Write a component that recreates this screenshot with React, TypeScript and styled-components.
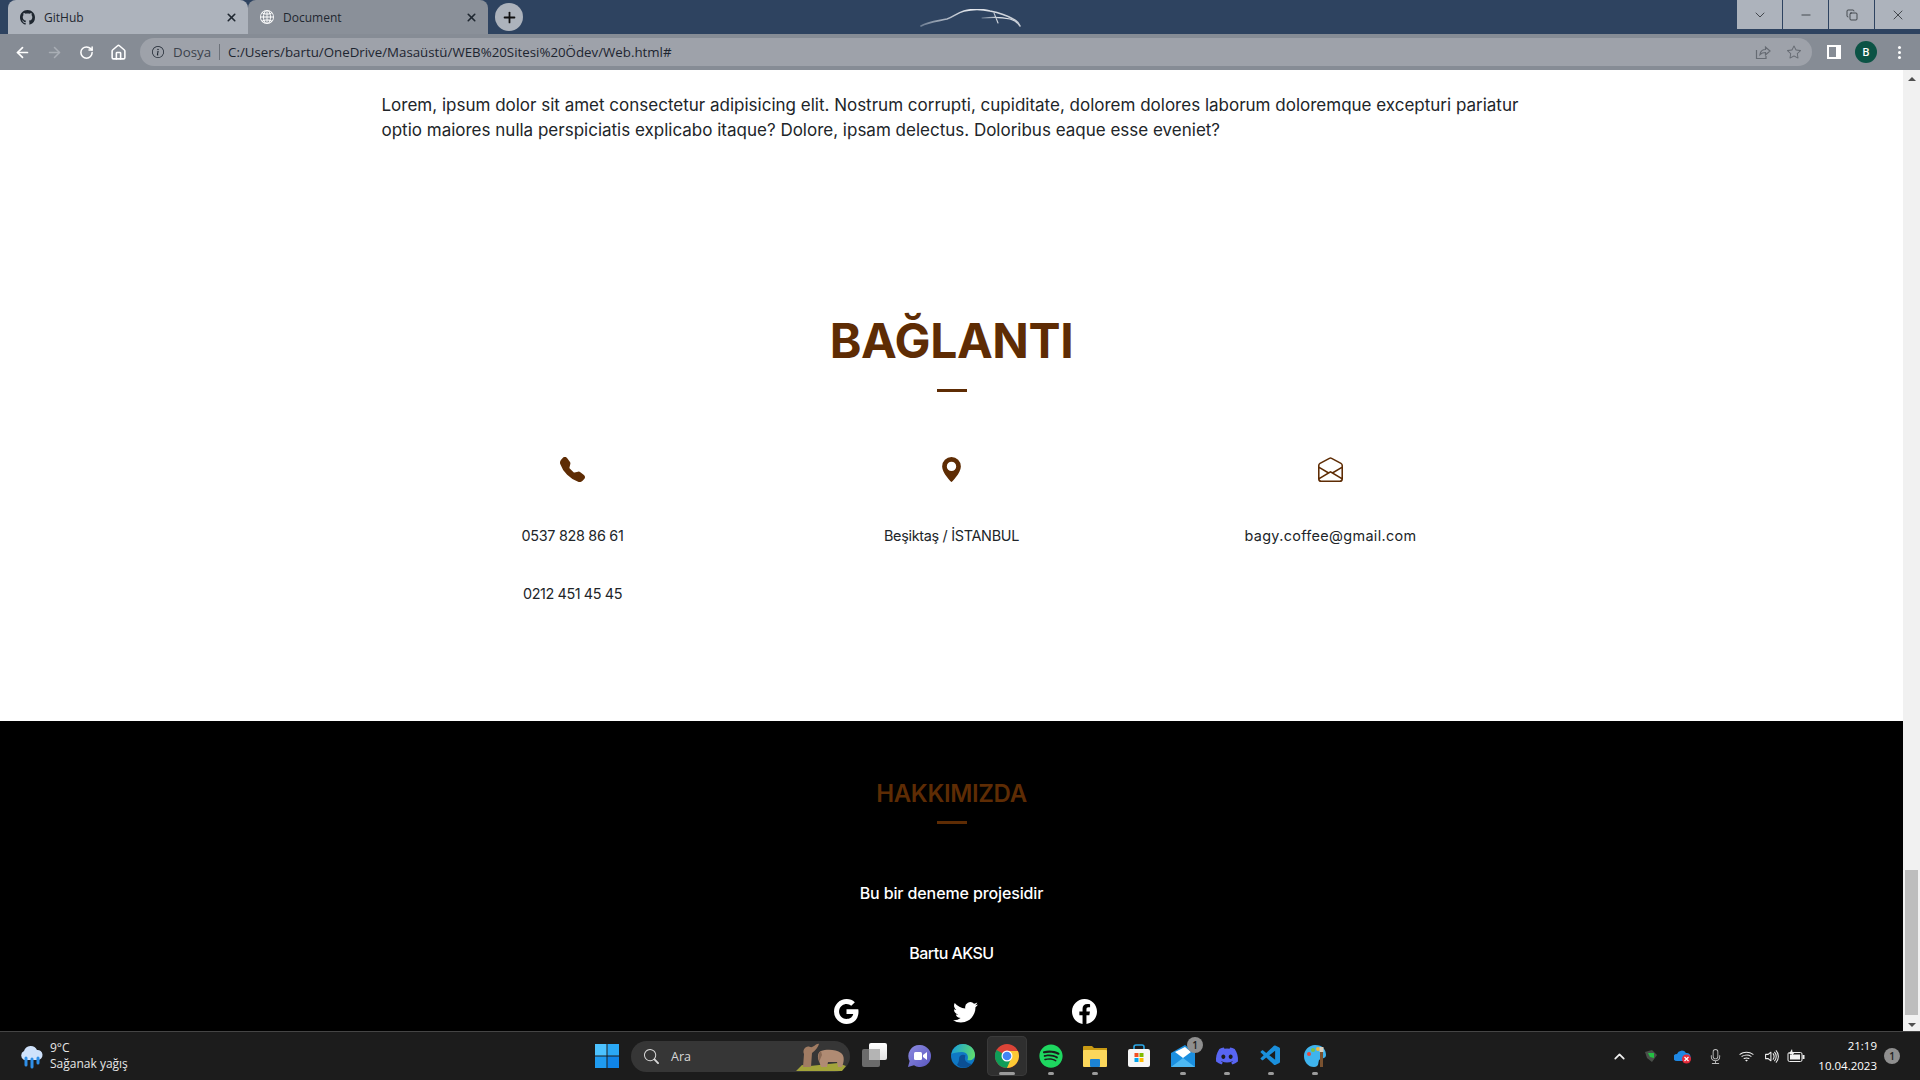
import * as React from 'react';
import styled, { createGlobalStyle } from 'styled-components';
import { BsTelephoneFill, BsGeoAltFill, BsEnvelopeOpen, BsGoogle, BsTwitter, BsFacebook, BsGithub, BsGlobe2, BsMic, BsVolumeUp, BsWifi, BsSearch, BsStar, BsInfoCircle } from 'react-icons/bs';
import { FaSpotify, FaDiscord } from 'react-icons/fa';
import { VscVscode } from 'react-icons/vsc';
import { ArrowLeft, ArrowRight, RotateCw, Home, Plus, X, ChevronDown, ChevronUp, Minus, Copy } from 'lucide-react';

const brown = '#5e2c04';
const bodyFont = `Inter, "Open Sans", sans-serif`;
const uiFont = `"Open Sans", "Noto Sans", sans-serif`;

const GlobalStyle = createGlobalStyle`
  html, body { margin: 0; padding: 0; height: 100%; overflow: hidden; }
  * { box-sizing: border-box; }
`;

const Screen = styled.div`
  width: 1920px;
  height: 1080px;
  display: flex;
  flex-direction: column;
  overflow: hidden;
  font-family: ${bodyFont};
  background: #fff;
`;

/* browser chrome */
const TabStrip = styled.div`
  height: 34px;
  flex: none;
  display: flex;
  align-items: flex-start;
  padding-left: 8px;
  background: #2e4360;
`;

const Tab = styled.div<{ $active?: boolean }>`
  width: 240px;
  height: 34px;
  display: flex;
  align-items: center;
  padding: 0 10px 0 12px;
  gap: 9px;
  border-radius: 8px 8px 0 0;
  background: ${(p) => (p.$active ? '#adb3bc' : '#8a9099')};
  color: #1f2730;
  font: 400 12px ${uiFont};
  svg { flex: none; }
`;

const TabTitle = styled.span`
  flex: 1;
`;

const NewTab = styled.div`
  width: 28px;
  height: 28px;
  margin: 3px 0 0 7px;
  border-radius: 50%;
  background: #adb3bc;
  display: flex;
  align-items: center;
  justify-content: center;
  color: #111;
`;

const CarLogo = styled.svg`
  margin: 9px 0 0 397px;
`;

const WindowButtons = styled.div`
  margin-left: auto;
  display: flex;
  gap: 1px;
  height: 29px;
`;

const WindowButton = styled.div`
  width: 45px;
  height: 29px;
  background: #adb3bc;
  display: flex;
  align-items: center;
  justify-content: center;
  color: #1b1f24;
`;

const Toolbar = styled.div`
  height: 36px;
  flex: none;
  display: flex;
  align-items: center;
  padding: 0 8px 0 6px;
  background: #868c95;
`;

const NavButton = styled.div<{ $off?: boolean }>`
  width: 32px;
  height: 32px;
  display: flex;
  align-items: center;
  justify-content: center;
  color: ${(p) => (p.$off ? '#a9aeb5' : '#fff')};
`;

const AddressBar = styled.div`
  width: 1672px;
  height: 28px;
  margin-left: 6px;
  padding: 0 11px 0 12px;
  border-radius: 14px;
  display: flex;
  align-items: center;
  background: #9ea2aa;
  font: 400 13.3px ${uiFont};
  color: #1d2530;
`;

const Scheme = styled.span`
  margin-left: 9px;
  padding-right: 8px;
  border-right: 1px solid #6d727a;
  line-height: 16px;
  color: #3c434c;
`;

const Url = styled.span`
  margin-left: 8px;
  flex: 1;
`;

const BarIcon = styled.span`
  display: flex;
  margin-left: 16px;
  color: #666b73;
`;

const SidePanel = styled.div`
  width: 14px;
  height: 14px;
  margin-left: 15px;
  border: 2px solid #fff;
  border-right-width: 5px;
  background: #868c95;
`;

const Avatar = styled.div`
  width: 22px;
  height: 22px;
  margin-left: 14px;
  border-radius: 50%;
  background: #0b5345;
  color: #fff;
  font: 600 11px/22px ${uiFont};
  text-align: center;
`;

const Dots = styled.div`
  margin-left: 21px;
  width: 3px;
  height: 3px;
  border-radius: 50%;
  background: #fff;
  box-shadow: 0 -5px 0 #fff, 0 5px 0 #fff;
`;

/* page */
const Viewport = styled.div`
  flex: 1;
  min-height: 0;
  display: flex;
`;

const Page = styled.div`
  flex: 1;
  min-width: 0;
  display: flex;
  flex-direction: column;
  overflow: hidden;
`;

const ContentArea = styled.section`
  height: 651px;
  flex: none;
  padding-top: 23px;
  background: #fff;
`;

const Intro = styled.p`
  width: 1140px;
  margin: 0 auto;
  font-size: 17px;
  line-height: 25.4px;
  color: #212529;
`;

const Heading = styled.h2`
  margin: 169px 0 0;
  font-size: 48px;
  line-height: 56px;
  font-weight: 700;
  letter-spacing: -0.4px;
  text-align: center;
  color: ${brown};
`;

const Rule = styled.div<{ $top: number }>`
  width: 30px;
  height: 3px;
  margin: ${(p) => p.$top}px auto 0;
  background: ${brown};
`;

const ContactGrid = styled.div`
  width: 1137px;
  margin: 65px auto 0;
  display: grid;
  grid-template-columns: repeat(3, 1fr);
`;

const ContactColumn = styled.div`
  display: flex;
  flex-direction: column;
  align-items: center;
  color: ${brown};
`;

const ContactText = styled.div<{ $first?: boolean; $tracking?: number }>`
  margin-top: ${(p) => (p.$first ? 44 : 38)}px;
  font-size: 14.4px;
  line-height: 20px;
  letter-spacing: ${(p) => p.$tracking ?? 0}px;
  color: #212529;
`;

const Footer = styled.footer`
  flex: 1;
  min-height: 0;
  padding-top: 59px;
  background: #000;
  text-align: center;
  color: #fff;
`;

const FooterHeading = styled.h3`
  margin: 0;
  font-size: 24px;
  line-height: 28px;
  font-weight: 600;
  letter-spacing: -0.35px;
  color: ${brown};
`;

const FooterText = styled.div<{ $top: number; $tracking: number }>`
  margin-top: ${(p) => p.$top}px;
  font-size: 16px;
  font-weight: 500;
  line-height: 20px;
  letter-spacing: ${(p) => p.$tracking}px;
`;

const Socials = styled.div`
  margin-top: 36px;
  padding-left: 27px;
  display: flex;
  justify-content: center;
  gap: 94px;
`;

const Scrollbar = styled.div`
  width: 17px;
  flex: none;
  display: flex;
  flex-direction: column;
  align-items: center;
  background: #f1f1f1;
`;

const Arrow = styled.div<{ $down?: boolean }>`
  width: 0;
  height: 0;
  margin: ${(p) => (p.$down ? '8px 0 0' : '7px 0 0')};
  border-left: 4px solid transparent;
  border-right: 4px solid transparent;
  ${(p) => (p.$down ? 'border-top: 4px solid #505050;' : 'border-bottom: 4px solid #505050;')}
`;

const Thumb = styled.div`
  width: 13px;
  height: 145px;
  margin-top: 789px;
  background: #bdbdbd;
`;

/* taskbar */
const Taskbar = styled.div`
  height: 49px;
  flex: none;
  display: flex;
  align-items: center;
  border-top: 1px solid #454545;
  background: #1c1c1c;
  color: #fff;
  font-family: ${uiFont};
`;

const Weather = styled.div`
  width: 587px;
  flex: none;
  padding-left: 18px;
  display: flex;
  align-items: center;
  gap: 6px;
`;

const WeatherText = styled.div`
  font-size: 12px;
  line-height: 16px;
  color: #e6e6e6;
`;

const StartIcons = styled.div`
  display: flex;
  align-items: center;
`;

const SearchBox = styled.div`
  width: 219px;
  height: 31px;
  margin-right: 5px;
  padding: 0 2px 0 13px;
  border-radius: 16px;
  display: flex;
  align-items: center;
  gap: 12px;
  background: #363636;
  color: #d8d8d8;
  font-size: 12.5px;
`;

const SearchLabel = styled.span`
  flex: 1;
`;

const TaskIcon = styled.div<{ $active?: boolean; $pip?: boolean }>`
  position: relative;
  width: 40px;
  height: 40px;
  margin-right: 4px;
  display: flex;
  align-items: center;
  justify-content: center;
  border-radius: 5px;
  ${(p) => p.$active && 'background: #2f2f2f; box-shadow: inset 0 0 0 1px #3a3a3a;'}
  &::after {
    content: '';
    display: ${(p) => (p.$active || p.$pip ? 'block' : 'none')};
    position: absolute;
    bottom: 1px;
    left: 50%;
    transform: translateX(-50%);
    width: ${(p) => (p.$active ? 16 : 6)}px;
    height: 3px;
    border-radius: 2px;
    background: #9b9b9b;
  }
`;

const Badge = styled.span`
  position: absolute;
  top: 1px;
  right: 0;
  width: 16px;
  height: 16px;
  border-radius: 50%;
  background: #8f8f8f;
  color: #222;
  font-size: 10px;
  font-weight: 600;
  line-height: 16px;
  text-align: center;
`;

const Tray = styled.div`
  margin-left: auto;
  display: flex;
  align-items: center;
  padding-right: 20px;
`;

const TrayIcon = styled.div<{ $width: number }>`
  width: ${(p) => p.$width}px;
  display: flex;
  justify-content: center;
  color: #f0f0f0;
`;

const Clock = styled.div`
  margin-left: 9px;
  font-size: 11.5px;
  line-height: 20px;
  text-align: right;
  color: #fff;
`;

const Notice = styled.div`
  width: 16px;
  height: 16px;
  margin-left: 7px;
  border-radius: 50%;
  background: #8f8f8f;
  color: #222;
  font-size: 10px;
  font-weight: 600;
  line-height: 16px;
  text-align: center;
`;

const Car = () => (
  <CarLogo width="102" height="18" viewBox="0 0 102 18" fill="none" stroke="url(#carShine)" strokeLinecap="round">
    <defs>
      <linearGradient id="carShine" x1="0" x2="1" y1="0" y2="0">
        <stop offset="0" stopColor="#6f7f94" />
        <stop offset="0.5" stopColor="#e6e9ee" />
        <stop offset="1" stopColor="#c4cad3" />
      </linearGradient>
    </defs>
    <path d="M1 17 C8 13 18 12 27 10 C33 8 37 4 44 2 C52 0 62 0 70 2 C80 4 88 7 93 10 C97 12 99 14 100 17" strokeWidth="1.6" />
    <path d="M27 10 L52 10" strokeWidth="1.2" />
    <path d="M62 9 C72 8 82 8 90 10 M74 4 L78 14 M90 10 C94 11 97 13 99 16" strokeWidth="1.1" />
  </CarLogo>
);

const ShareIcon = () => (
  <svg width="16" height="16" viewBox="0 0 16 16" fill="none" stroke="currentColor" strokeWidth="1.2">
    <path d="M1.500 6 V14.500 H11 V12" />
    <path d="M5 10.500 C5.500 7 8 5.500 10.500 5.500 V3 L15 7 L10.500 11 V8.500 C8 8.500 6.500 9 5 10.500 z" />
  </svg>
);

const WeatherIcon = () => (
  <svg width="26" height="26" viewBox="0 0 26 26">
    <path d="M6 17 a5 5 0 0 1 0-9 a7 7 0 0 1 13-1 a5 5 0 0 1 1 10 z" fill="#cfe2fb" />
    <path d="M8 15 v7 M14 16 v8 M20 15 v5" stroke="#2f8fe8" strokeWidth="3" strokeLinecap="round" />
  </svg>
);

const Windows = () => (
  <svg width="24" height="24" viewBox="0 0 24 24">
    <rect x="0" y="0" width="11.5" height="11.5" fill="#4cc2ff" />
    <rect x="12.5" y="0" width="11.5" height="11.5" fill="#2aa8f5" />
    <rect x="0" y="12.5" width="11.5" height="11.5" fill="#1f9bf0" />
    <rect x="12.5" y="12.5" width="11.5" height="11.5" fill="#0f84e8" />
  </svg>
);

const Elephants = () => (
  <svg width="52" height="29" viewBox="0 0 52 29">
    <path d="M0 29 L6 23 L14 24 L42 21 L50 24 L46 29 Z" fill="#a3a43a" />
    <path d="M7 25 L8 12 C6 8 10 3 14 5 C18 6 20 1 23 2 C22 5 20 8 16 11 L15 25 Z" fill="#a17c63" />
    <path d="M25 25 L23 19 C21 15 22 10 25 9 C30 7 40 7 45 11 C49 14 48 20 46 25 H42 L41 20 H32 L31 25 Z" fill="#b08b73" />
    <path d="M25 9 C22 11 22 16 23 20 L26 13 z" fill="#8a6a55" />
  </svg>
);

const TaskView = () => (
  <svg width="26" height="26" viewBox="0 0 26 26">
    <defs>
      <linearGradient id="taskFront" x1="0" x2="0" y1="0" y2="1">
        <stop offset="0" stopColor="#ffffff" />
        <stop offset="1" stopColor="#e2e2e2" />
      </linearGradient>
    </defs>
    <rect x="7" y="0" width="18" height="17" rx="2" fill="url(#taskFront)" />
    <rect x="0" y="6" width="18" height="18" rx="2" fill="#6b6b6b" />
    <rect x="7" y="6" width="11" height="11" fill="#b4b4b4" />
  </svg>
);

const Teams = () => (
  <svg width="24" height="24" viewBox="0 0 24 24">
    <defs>
      <linearGradient id="teamsFill" x1="0" x2="1" y1="0" y2="1">
        <stop offset="0" stopColor="#8d8be0" />
        <stop offset="1" stopColor="#5a57c0" />
      </linearGradient>
    </defs>
    <path d="M13 1 a11 11 0 1 1 -6 20.200 L1 23 L2.600 17 A11 11 0 0 1 13 1 z" fill="url(#teamsFill)" />
    <rect x="7" y="8" width="8" height="8" rx="1.5" fill="#fff" />
    <path d="M16 11 l4-3 v8 l-4-3 z" fill="#fff" />
  </svg>
);

const Edge = () => (
  <svg width="24" height="24" viewBox="0 0 24 24">
    <defs>
      <linearGradient id="edgeTop" x1="0" x2="1" y1="0.300" y2="0.500">
        <stop offset="0" stopColor="#1aa0d8" />
        <stop offset="1" stopColor="#5fdc6e" />
      </linearGradient>
    </defs>
    <circle cx="12" cy="12" r="12" fill="#0f78c4" />
    <path d="M0.500 10 C2 3 7 0 12 0 C19 0 24 5 24 11 C24 15 20 17 16.500 16 C18 12 16 8 11 8 C6 8 2 9 0.500 10 z" fill="url(#edgeTop)" />
    <path d="M8 15 C8 11 12 10 14.500 11.500 C13 15 14 19 21 20 C17 24.500 9 25 6 20.500 C7.500 19 8 17 8 15 z" fill="#0b4f94" />
  </svg>
);

const Chrome = () => (
  <svg width="24" height="24" viewBox="0 0 24 24">
    <circle cx="12" cy="12" r="12" fill="#db4437" />
    <path d="M12 12 L1.600 6 A12 12 0 0 0 12 24 L18 13.500 z" fill="#0f9d58" />
    <path d="M12 7 H22.900 A12 12 0 0 1 12 24 L17 12 z" fill="#fcc934" />
    <circle cx="12" cy="12" r="5.500" fill="#fff" />
    <circle cx="12" cy="12" r="4.300" fill="#4285f4" />
  </svg>
);

const Files = () => (
  <svg width="24" height="24" viewBox="0 0 24 24">
    <path d="M0 3 a1 1 0 0 1 1-1 h8 l2 2 h13 v4 H0 z" fill="#c99a13" />
    <rect x="0" y="6" width="24" height="17" rx="1" fill="#fbd75b" />
    <rect x="7" y="15" width="10" height="8" rx="1" fill="#1c83d4" />
  </svg>
);

const Store = () => (
  <svg width="24" height="24" viewBox="0 0 24 24">
    <path d="M7 5 V3 a2 2 0 0 1 2-2 h6 a2 2 0 0 1 2 2 v2" stroke="#2aa8e8" strokeWidth="1.6" fill="none" />
    <rect x="1" y="5" width="22" height="18" rx="2" fill="#f6f6f6" />
    <rect x="7.500" y="9" width="4" height="4" fill="#f25022" />
    <rect x="12.500" y="9" width="4" height="4" fill="#7fba00" />
    <rect x="7.500" y="14" width="4" height="4" fill="#00a4ef" />
    <rect x="12.500" y="14" width="4" height="4" fill="#ffb900" />
  </svg>
);

const Mail = () => (
  <svg width="24" height="24" viewBox="0 0 24 24">
    <path d="M0 9 L14 1 L24 9 V23 H0 z" fill="#1a8fe0" />
    <path d="M4 8 L14 3 L20 8 L12 14 z" fill="#fff" />
    <path d="M0 23 L12 14 L24 23 z" fill="#4db8f2" />
  </svg>
);

const Palette = () => (
  <svg width="24" height="24" viewBox="0 0 24 24">
    <path d="M12 1 C20 1 23 6 23 11 C23 15 18 14 16 16 C15 19 16 23 11 23 C5 23 1 18 1 12 C1 6 6 1 12 1 z" fill="#3fb4ee" />
    <circle cx="6" cy="10" r="2" fill="#e8483a" />
    <circle cx="10" cy="6" r="2" fill="#7cc243" />
    <circle cx="15" cy="5" r="2" fill="#f4b83a" />
    <rect x="17" y="6" width="3" height="17" fill="#7a5230" />
    <rect x="16.500" y="3" width="4" height="5" fill="#d8d0c0" />
  </svg>
);

const Shield = () => (
  <svg width="14" height="14" viewBox="0 0 14 14">
    <path d="M1 3 L8 1 L13 6 L8 13 L3 9 z" fill="#4a4f4a" />
    <path d="M4 4 L10 4 L10 9 L6 8 z" fill="#23c043" />
  </svg>
);

const CloudError = () => (
  <svg width="18" height="16" viewBox="0 0 18 16">
    <path d="M3 13 a3.500 3.500 0 0 1 0-7 a5 5 0 0 1 9-1 a4 4 0 0 1 1 8 z" fill="#1e88e5" />
    <circle cx="12.500" cy="11" r="4.500" fill="#e5293a" />
    <path d="M10.500 9 L14.500 13 M14.500 9 L10.500 13" stroke="#fff" strokeWidth="1.2" />
  </svg>
);

const Battery = () => (
  <svg width="18" height="14" viewBox="0 0 18 14">
    <rect x="1" y="3.500" width="14" height="9" rx="1.500" fill="none" stroke="#f0f0f0" />
    <rect x="3" y="5.500" width="10" height="5" fill="#f0f0f0" />
    <rect x="15.500" y="6" width="2" height="4" fill="#f0f0f0" />
    <path d="M5 0 L2 5 H5 L4 8 L8 3 H5.500 z" fill="#f0f0f0" />
  </svg>
);

const App: React.FC = () => {
  return (
    <Screen>
      <GlobalStyle />
      <TabStrip>
        <Tab $active>
          <BsGithub size={15} />
          <TabTitle>GitHub</TabTitle>
          <X size={13} strokeWidth={3} />
        </Tab>
        <Tab>
          <BsGlobe2 size={14} color="#fff" />
          <TabTitle>Document</TabTitle>
          <X size={13} strokeWidth={3} />
        </Tab>
        <NewTab><Plus size={17} strokeWidth={2.5} /></NewTab>
        <Car />
        <WindowButtons>
          <WindowButton><ChevronDown size={16} strokeWidth={1.1} /></WindowButton>
          <WindowButton><Minus size={14} strokeWidth={1.2} /></WindowButton>
          <WindowButton><Copy size={12} strokeWidth={1.4} /></WindowButton>
          <WindowButton><X size={16} strokeWidth={1.1} /></WindowButton>
        </WindowButtons>
      </TabStrip>
      <Toolbar>
        <NavButton><ArrowLeft size={17} strokeWidth={2.4} /></NavButton>
        <NavButton $off><ArrowRight size={17} strokeWidth={2.2} /></NavButton>
        <NavButton><RotateCw size={15} strokeWidth={2.4} /></NavButton>
        <NavButton><Home size={17} strokeWidth={2.2} /></NavButton>
        <AddressBar>
          <BsInfoCircle size={12} />
          <Scheme>Dosya</Scheme>
          <Url>C:/Users/bartu/OneDrive/Masaüstü/WEB%20Sitesi%20Ödev/Web.html#</Url>
          <BarIcon><ShareIcon /></BarIcon>
          <BarIcon><BsStar size={14} /></BarIcon>
        </AddressBar>
        <SidePanel />
        <Avatar>B</Avatar>
        <Dots />
      </Toolbar>

      <Viewport>
        <Page>
          <ContentArea>
            <Intro>
              Lorem, ipsum dolor sit amet consectetur adipisicing elit. Nostrum corrupti, cupiditate, dolorem dolores laborum doloremque excepturi pariatur optio maiores nulla perspiciatis explicabo itaque? Dolore, ipsam delectus. Doloribus eaque esse eveniet?
            </Intro>
            <Heading>BAĞLANTI</Heading>
            <Rule $top={20} />
            <ContactGrid>
              <ContactColumn>
                <BsTelephoneFill size={25} />
                <ContactText $first $tracking={-0.3}>0537 828 86 61</ContactText>
                <ContactText $tracking={-0.4}>0212 451 45 45</ContactText>
              </ContactColumn>
              <ContactColumn>
                <BsGeoAltFill size={25} />
                <ContactText $first $tracking={-0.3}>Beşiktaş / İSTANBUL</ContactText>
              </ContactColumn>
              <ContactColumn>
                <BsEnvelopeOpen size={25} />
                <ContactText $first $tracking={0.35}>bagy.coffee@gmail.com</ContactText>
              </ContactColumn>
            </ContactGrid>
          </ContentArea>
          <Footer>
            <FooterHeading>HAKKIMIZDA</FooterHeading>
            <Rule $top={13} />
            <FooterText $top={59} $tracking={-0.12}>Bu bir deneme projesidir</FooterText>
            <FooterText $top={40} $tracking={-0.55}>Bartu AKSU</FooterText>
            <Socials>
              <BsGoogle size={25} />
              <BsTwitter size={25} />
              <BsFacebook size={25} />
            </Socials>
          </Footer>
        </Page>
        <Scrollbar>
          <Arrow />
          <Thumb />
          <Arrow $down />
        </Scrollbar>
      </Viewport>

      <Taskbar>
        <Weather>
          <WeatherIcon />
          <WeatherText>
            9°C<br />Sağanak yağış
          </WeatherText>
        </Weather>
        <StartIcons>
          <TaskIcon><Windows /></TaskIcon>
          <SearchBox>
            <BsSearch size={15} />
            <SearchLabel>Ara</SearchLabel>
            <Elephants />
          </SearchBox>
          <TaskIcon><TaskView /></TaskIcon>
          <TaskIcon><Teams /></TaskIcon>
          <TaskIcon><Edge /></TaskIcon>
          <TaskIcon $active><Chrome /></TaskIcon>
          <TaskIcon $pip><FaSpotify size={24} color="#1ed760" /></TaskIcon>
          <TaskIcon $pip><Files /></TaskIcon>
          <TaskIcon><Store /></TaskIcon>
          <TaskIcon $pip><Mail /><Badge>1</Badge></TaskIcon>
          <TaskIcon $pip><FaDiscord size={24} color="#5865f2" /></TaskIcon>
          <TaskIcon $pip><VscVscode size={24} color="#1a8fdc" /></TaskIcon>
          <TaskIcon $pip><Palette /></TaskIcon>
        </StartIcons>
        <Tray>
          <TrayIcon $width={32}><ChevronUp size={17} strokeWidth={2.4} /></TrayIcon>
          <TrayIcon $width={32}><Shield /></TrayIcon>
          <TrayIcon $width={32}><CloudError /></TrayIcon>
          <TrayIcon $width={32}><BsMic size={15} color="#bdbdbd" /></TrayIcon>
          <TrayIcon $width={30}><BsWifi size={15} /></TrayIcon>
          <TrayIcon $width={22}><BsVolumeUp size={17} /></TrayIcon>
          <TrayIcon $width={26}><Battery /></TrayIcon>
          <Clock>21:19<br />10.04.2023</Clock>
          <Notice>1</Notice>
        </Tray>
      </Taskbar>
    </Screen>
  );
};

export default App;
